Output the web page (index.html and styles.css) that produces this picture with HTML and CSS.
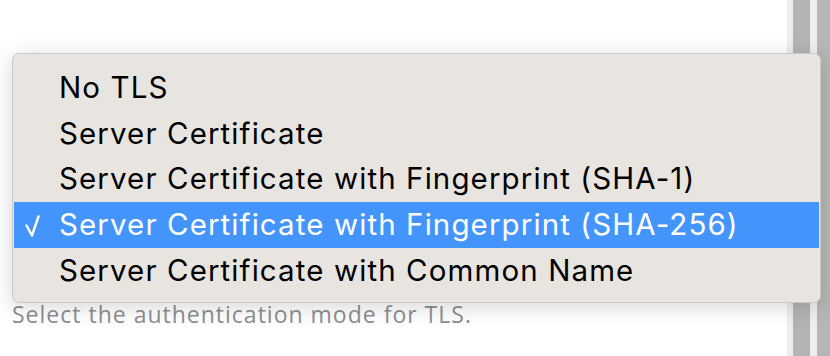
FILE: index.html
```html
<!DOCTYPE html>
<html>
<head>
<meta charset="utf-8">
<link rel="stylesheet" href="styles.css">
</head>
<body>
<div class="window">
  <div class="content">
    <p class="hint">Select the authentication mode for TLS.</p>
  </div>
  <div class="gutter">
    <span class="g g1"></span>
    <span class="g g2"></span>
    <span class="g g3"></span>
    <span class="g g4"></span>
  </div>
  <ul class="menu">
    <li class="item">No TLS</li>
    <li class="item">Server Certificate</li>
    <li class="item">Server Certificate with Fingerprint (SHA-1)</li>
    <li class="item selected"><svg class="check" width="16" height="24" viewBox="0 0 16 24"><polyline points="1.5,10.5 7,20.5 13.5,1.5" fill="none" stroke="#fff" stroke-width="2.4" stroke-linecap="round" stroke-linejoin="round"/></svg>Server Certificate with Fingerprint (SHA-256)</li>
    <li class="item">Server Certificate with Common Name</li>
  </ul>
</div>
</body>
</html>
```
FILE: styles.css
```css
html, body {
  margin: 0;
  padding: 0;
  background: #fff;
}
.window {
  position: relative;
  width: 830px;
  height: 356px;
  display: flex;
  overflow: hidden;
}
.content {
  flex: 1;
  padding: 299px 0 0 12px;
}
.hint {
  margin: 0;
  font-family: "Open Sans", sans-serif;
  font-size: 23px;
  line-height: 30px;
  letter-spacing: 1px;
  color: #8c8f93;
}
.gutter {
  display: flex;
  width: 43px;
}
.g { display: block; height: 100%; }
.g1 { width: 6px; background: #ededed; }
.g2 { width: 17px; background: #b4b4b4; }
.g3 { width: 7px; background: #eeeeee; }
.g4 { width: 13px; background: #b6b6b6; }
.menu {
  position: absolute;
  left: 12px;
  top: 53px;
  width: 805px;
  margin: 0;
  padding: 11px 1px 9px;
  list-style: none;
  background: #e8e4e0;
  border: 1px solid #cbc8c5;
  border-radius: 7px;
  box-shadow: 0 4px 22px rgba(0, 0, 0, 0.16);
}
.item {
  position: relative;
  height: 45.7px;
  line-height: 45.7px;
  padding-left: 45px;
  font-family: Inter, "Liberation Sans", sans-serif;
  font-size: 29.5px;
  letter-spacing: 1.1px;
  color: #000;
  white-space: nowrap;
}
.item.selected {
  background: #4495fb;
  color: #fff;
}
.check {
  position: absolute;
  left: 11px;
  top: 13px;
}
```
